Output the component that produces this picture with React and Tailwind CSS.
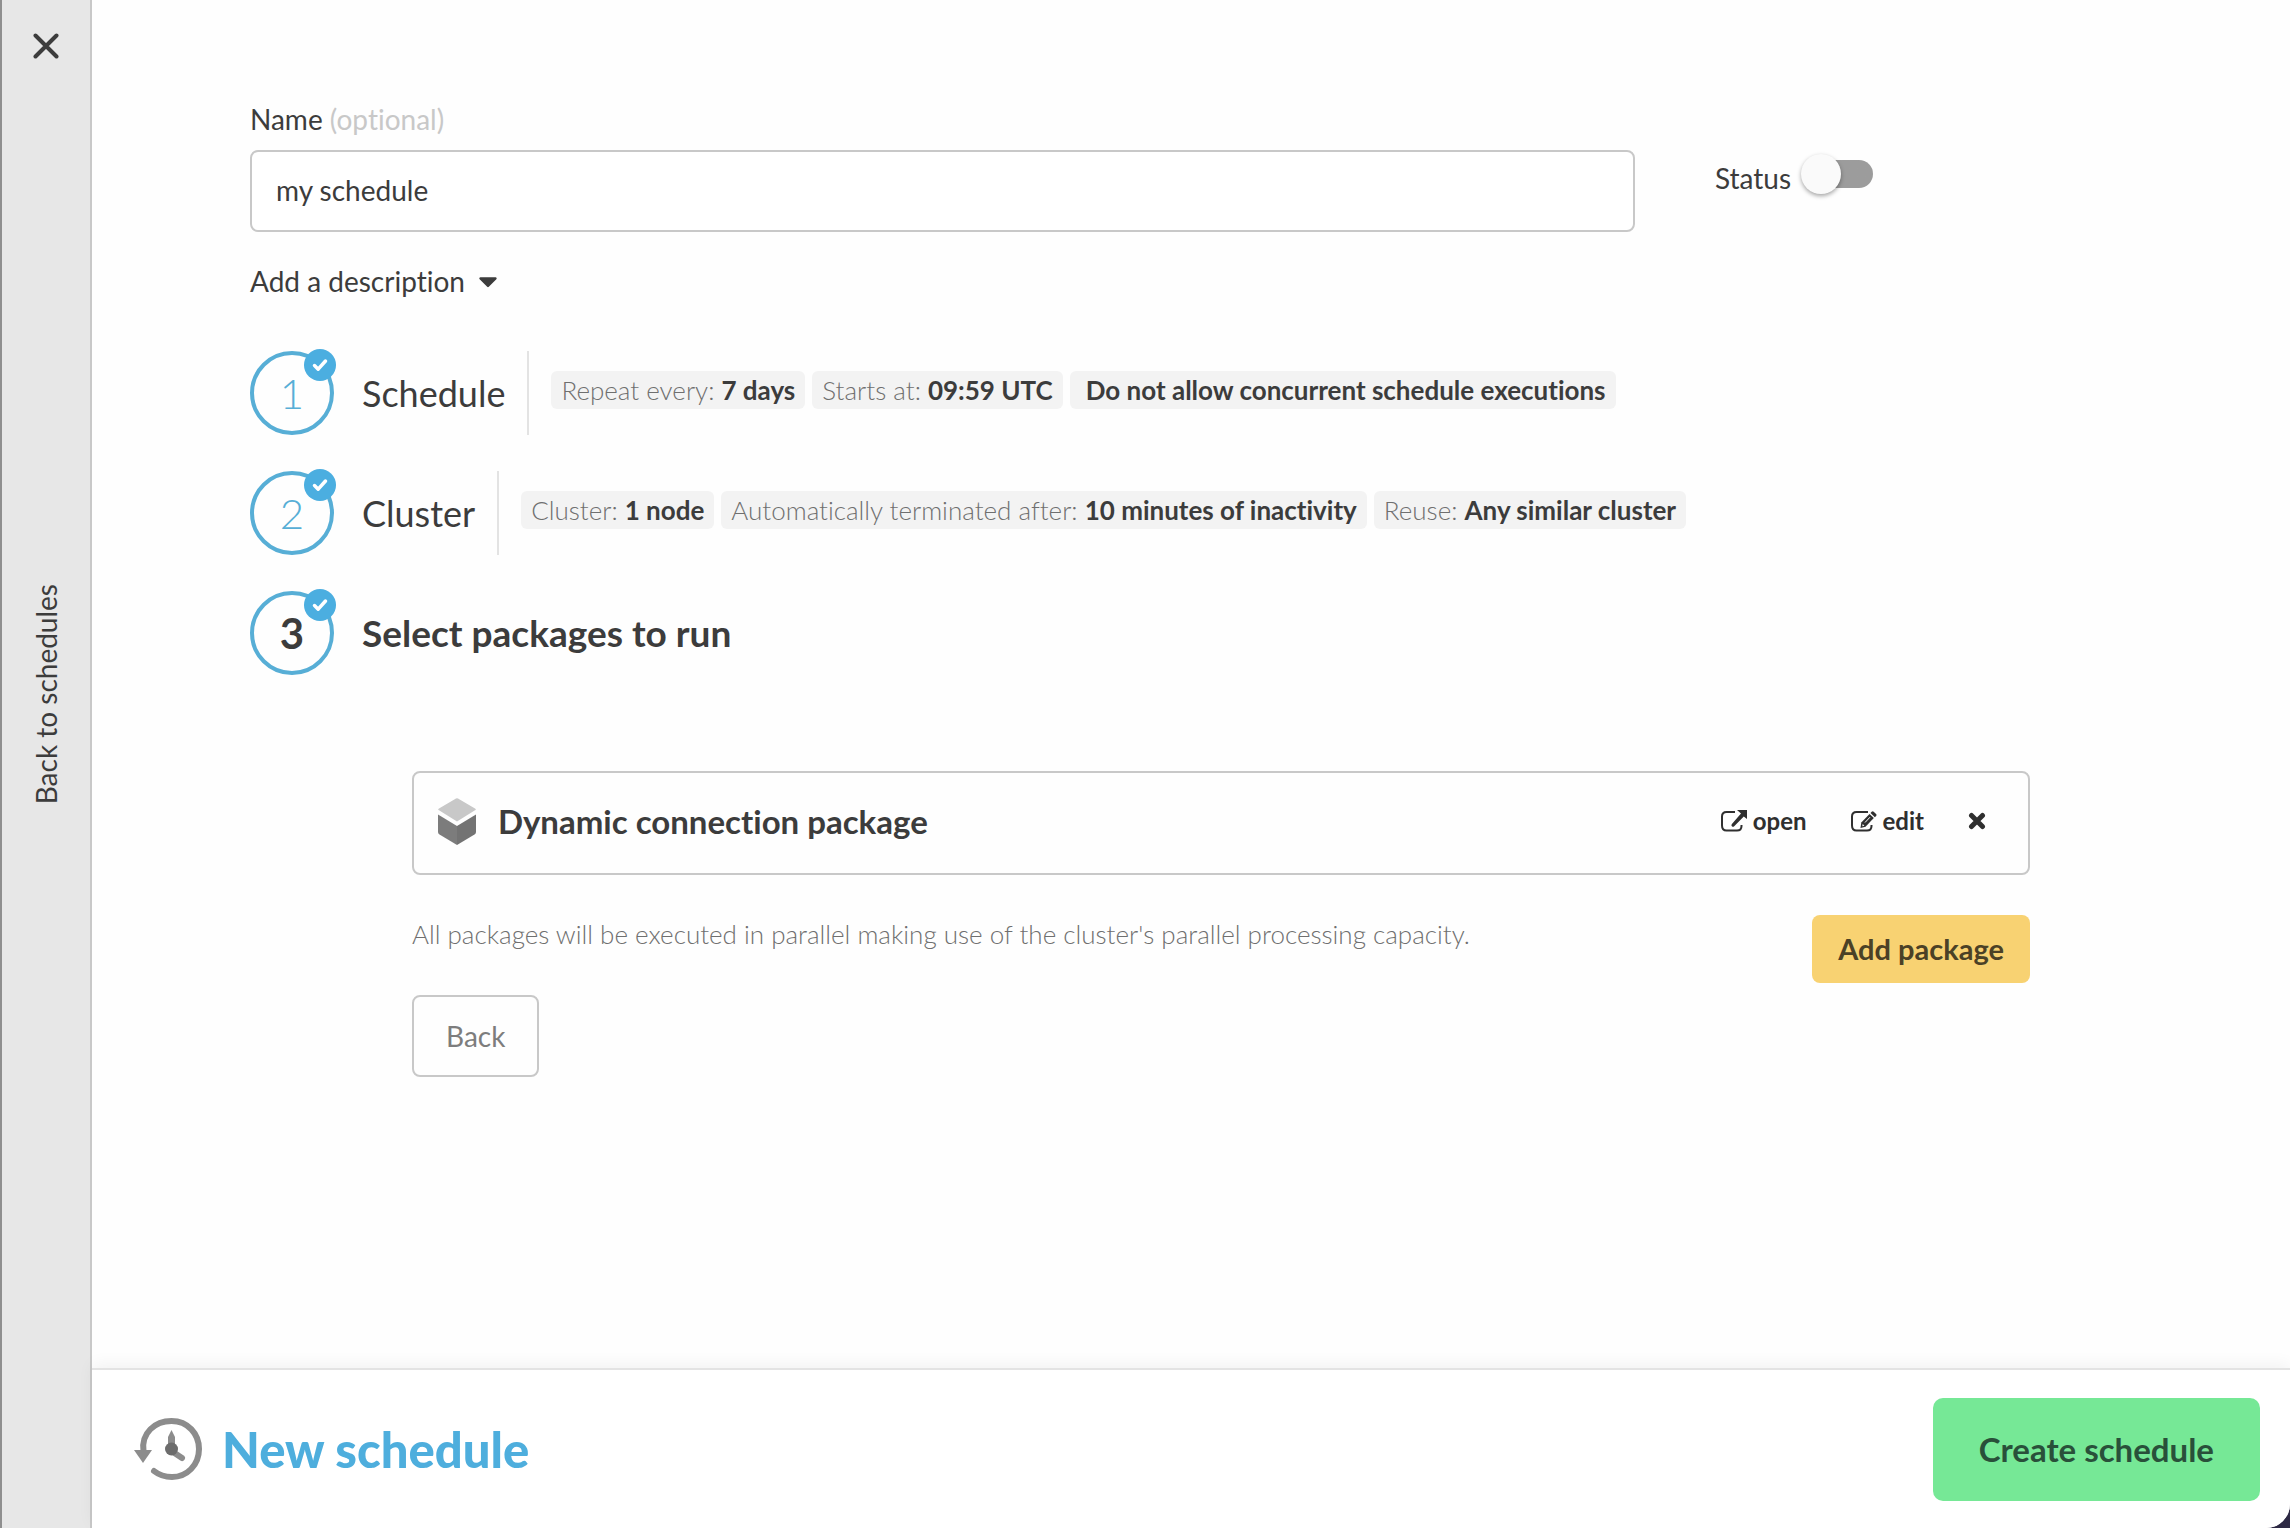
import React, { useState } from 'react';
import { FaCaretDown } from 'react-icons/fa';

// --- UI pieces ---
const CloseIcon = () => (
  <svg viewBox="0 0 26 26" className="size-[26px]" fill="none" stroke="currentColor" strokeWidth="4" strokeLinecap="round">
    <path d="M2.5 2.5l21 21M23.5 2.5l-21 21" />
  </svg>
);

const CheckIcon = () => (
  <svg viewBox="0 0 16 16" className="size-4" fill="none" stroke="currentColor" strokeWidth="3.500" strokeLinecap="round" strokeLinejoin="round">
    <path d="M2.500 8.500l3.700 3.700 7.300-8.200" />
  </svg>
);

const BoxIcon = () => (
  <svg viewBox="0 0 38 47" className="h-[47px] w-[38px]">
    <path d="M1 12.300Q-.6 11.500 1 10.500L18 .6q1-.6 2 0l17 9.900q1.600 1 0 1.800L19 23.500z" fill="#c8c8c8" />
    <path d="M0 16.500l19 11.500v19L1.500 36.500Q0 35.500 0 34z" fill="#7c7c7c" />
    <path d="M38 16.500L19 28v19l17.500-10.500Q38 35.500 38 34z" fill="#737373" />
  </svg>
);

const OpenIcon = () => (
  <svg viewBox="0 0 26 22" className="h-[22px] w-[26px]">
    <path d="M14 2H5.500Q1 2 1 6.500v9Q1 20.500 5.500 20.500H16Q20.500 20.500 20.500 16v-1" fill="none" stroke="currentColor" strokeWidth="2" />
    <path d="M16 0h10v9l-3.200-2.600-9.600 9.800q-1.200 1-2.300 0t0-2.300L20 3.500z" fill="currentColor" />
  </svg>
);

const EditIcon = () => (
  <svg viewBox="0 0 26 22" className="h-[22px] w-[26px]">
    <path d="M17 2H5.500Q1 2 1 6.500v9Q1 20.500 5.500 20.500H16Q20.500 20.500 20.500 16v-1" fill="none" stroke="currentColor" strokeWidth="2" />
    <path d="M9.500 18l.8-5.500L18.500 4l4.300 4-8.300 8.800z" fill="currentColor" />
    <path d="M19.500 3l1.200-1.300q1-.9 2 0l2.400 2.200q.9 1 0 2L23.900 7.200z" fill="currentColor" />
    <path d="M11.300 16.200l.4-2.200 1.700 1.700z" fill="#fff" />
    <path d="M14 12.500l5-5.300" stroke="#fff" strokeWidth="1" />
  </svg>
);

const RemoveIcon = () => (
  <svg viewBox="0 0 18 18" className="size-[18px]" fill="none" stroke="currentColor" strokeWidth="5" strokeLinecap="round">
    <path d="M3.500 3.500l11 11M14.500 3.500l-11 11" />
  </svg>
);

const HistoryIcon = () => (
  <svg viewBox="0 0 68 66" className="h-[66px] w-[68px]">
    <path d="M9.500 35C7 17 21 5 37.500 5C54 5 65 18 65 33C65 49 53 61 38 61Q27.500 61 20 55" fill="none" stroke="#8c8c8c" strokeWidth="6" strokeLinecap="round" />
    <path d="M0 34h18l-9 13z" fill="#8c8c8c" />
    <path d="M37.500 14l3.500 7v12h-7V21z" fill="#8c8c8c" />
    <path d="M39 36l9 6" stroke="#8c8c8c" strokeWidth="6" strokeLinecap="round" />
    <circle cx="37.500" cy="33" r="6.500" fill="#6c6c6c" />
  </svg>
);

const Chip = ({ label, value }) => (
  <li className="rounded-md bg-[#f3f3f3] px-[10px] text-[26px] leading-[38px] font-light text-[#6f6f6f]">
    {label} <strong className={label ? 'font-bold text-[#3c3c3c]' : 'pl-[6px] font-bold text-[#3c3c3c]'}>{value}</strong>
  </li>
);

const Step = ({ number, title, chips, active }) => (
  <section className="flex h-[120px] items-center">
    <div className="relative flex size-[84px] shrink-0 items-center justify-center rounded-full border-4 border-[#57aed6]">
      <span className={active ? 'text-[42px] font-bold' : 'text-[42px] font-light text-[#57aed6]'}>{number}</span>
      <span className="absolute -top-[6px] -right-[6px] flex size-8 items-center justify-center rounded-full bg-[#4baee0] text-white">
        <CheckIcon />
      </span>
    </div>
    <h2 className={active ? 'ml-7 text-[37px] font-bold' : 'ml-7 text-[36px]'}>{title}</h2>
    {chips && (
      <ul className="ml-[22px] flex h-[84px] items-center gap-[7px] border-l-2 border-[#e3e3e3] pb-[6px] pl-[22px] whitespace-nowrap">
        {chips.map((chip) => (
          <Chip key={chip.value} {...chip} />
        ))}
      </ul>
    )}
  </section>
);

const SCHEDULE_CHIPS = [
  { label: 'Repeat every:', value: '7 days' },
  { label: 'Starts at:', value: '09:59 UTC' },
  { label: '', value: 'Do not allow concurrent schedule executions' },
];

const CLUSTER_CHIPS = [
  { label: 'Cluster:', value: '1 node' },
  { label: 'Automatically terminated after:', value: '10 minutes of inactivity' },
  { label: 'Reuse:', value: 'Any similar cluster' },
];

function App() {
  const [name, setName] = useState('my schedule');
  const [enabled, setEnabled] = useState(false);

  return (
    <div className="flex min-h-screen bg-[#2e2a45] font-['Lato','Liberation_Sans',sans-serif] text-[28px] leading-[34px] text-[#3c3c3c] [font-variant-ligatures:none]">
      <aside className="flex w-[92px] shrink-0 flex-col items-center border-r-2 border-l-2 border-r-[#c8c8c8] border-l-[#8f8f8f] bg-[#e7e7e7] pt-[33px]">
        <button aria-label="Close">
          <CloseIcon />
        </button>
        <a href="#schedules" className="flex flex-1 items-center pb-[198px]">
          <span className="rotate-180 [writing-mode:vertical-rl]">Back to schedules</span>
        </a>
      </aside>

      <div className="flex min-w-0 flex-1 flex-col rounded-br-[24px] bg-[#fefefe]">
        <main className="flex-1 pt-[102px] pr-[260px] pl-[158px]">
          <div className="flex">
            <div className="flex-1">
              <label htmlFor="name" className="block">
                Name <span className="text-[#c8c8c8]">(optional)</span>
              </label>
              <input
                id="name"
                value={name}
                onChange={(e) => setName(e.target.value)}
                className="mt-[14px] block h-[82px] w-full rounded-lg border-2 border-[#c8c8c8] bg-white px-6 pb-[2px] outline-none"
              />
            </div>
            <label className="ml-20 flex w-[315px] gap-[10px] pt-[52px]">
              <span className="pt-[7px]">Status</span>
              <input type="checkbox" role="switch" checked={enabled} onChange={(e) => setEnabled(e.target.checked)} className="peer sr-only" />
              <span className="mt-[6px] flex h-7 w-[72px] items-center rounded-full bg-linear-to-r from-transparent from-20% to-[#9c9c9c] to-20% peer-checked:justify-end">
                <span className="size-10 rounded-full bg-[#fafafa] shadow-[0_2px_4px_rgba(0,0,0,0.35)]"></span>
              </span>
            </label>
          </div>

          <button className="mt-[32px] mb-[35px] flex items-center gap-2">
            Add a description
            <FaCaretDown className="size-[30px]" />
          </button>

          <Step number="1" title="Schedule" chips={SCHEDULE_CHIPS} />
          <Step number="2" title="Cluster" chips={CLUSTER_CHIPS} />
          <Step number="3" title="Select packages to run" active />

          <div className="mt-[78px] ml-[162px]">
            <div className="flex h-[104px] items-center rounded-lg border-2 border-[#c8c8c8] pr-[42px] pb-1 pl-6">
              <BoxIcon />
              <h3 className="ml-[22px] flex-1 text-[33px] font-bold">Dynamic connection package</h3>
              <div className="flex items-center text-[24px] font-bold text-[#2f2f2f]">
                <a href="#open" className="mr-11 flex items-center gap-[6px]">
                  <OpenIcon />
                  open
                </a>
                <a href="#edit" className="mr-11 flex items-center gap-[6px]">
                  <EditIcon />
                  edit
                </a>
                <button aria-label="Remove">
                  <RemoveIcon />
                </button>
              </div>
            </div>
            <div className="mt-10 flex items-start justify-between">
              <p className="pt-[2px] text-[26px] font-light text-[#6f6f6f]">
                All packages will be executed in parallel making use of the cluster's parallel processing capacity.
              </p>
              <button className="h-[68px] rounded-lg bg-[#f8d272] px-[26px] text-[29px] font-bold text-[#4b4126]">Add package</button>
            </div>
            <button className="mt-3 h-[82px] rounded-lg border-2 border-[#c8c8c8] px-8 text-[#7d7d7d]">Back</button>
          </div>
        </main>

        <footer className="flex h-[160px] items-center justify-between rounded-br-[24px] border-t-2 border-[#e3e3e3] bg-white pr-[30px] pl-[42px] shadow-[0_-4px_16px_rgba(0,0,0,0.05)]">
          <div className="flex items-center gap-5">
            <HistoryIcon />
            <h1 className="text-[49px] font-black text-[#4eaedd]">New schedule</h1>
          </div>
          <button className="h-[103px] rounded-[10px] bg-[#76e896] px-[46px] text-[33px] font-bold text-[#29503a]">Create schedule</button>
        </footer>
      </div>
    </div>
  );
}

export default App;
